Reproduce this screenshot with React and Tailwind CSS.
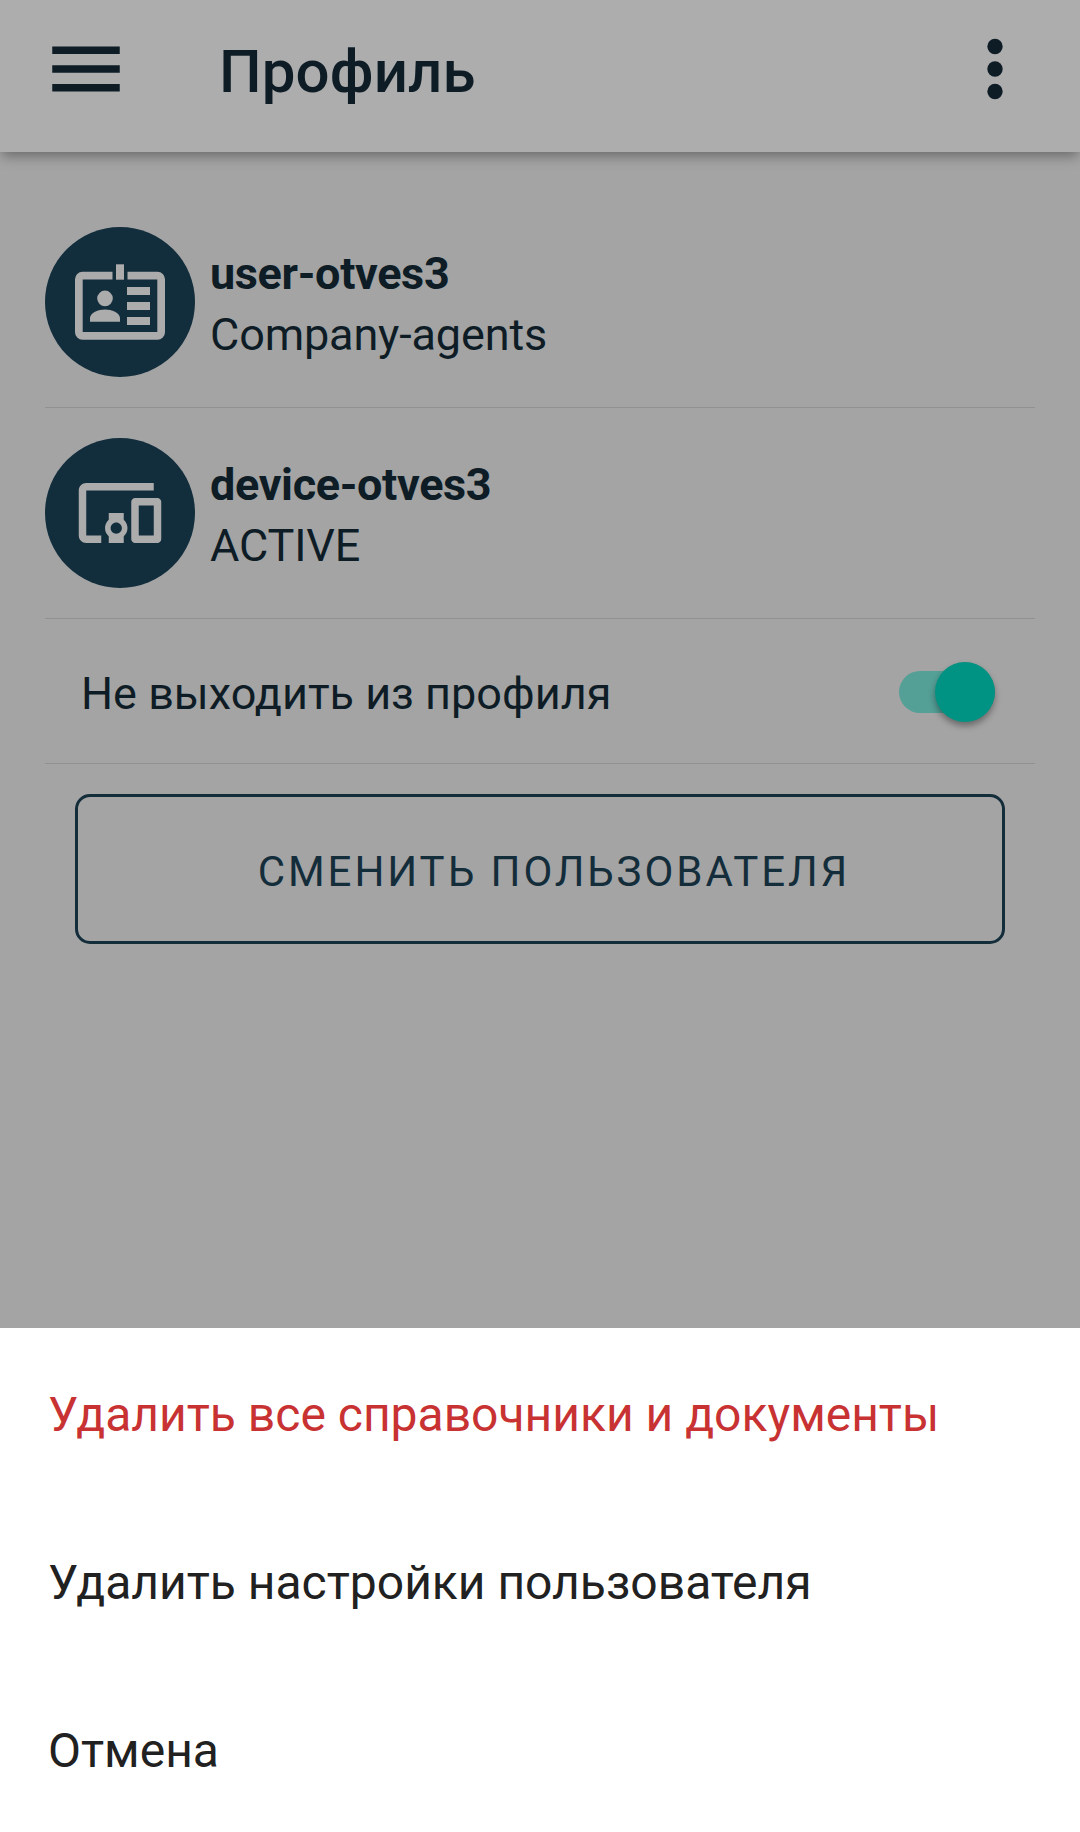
function MenuIcon() {
  return (
    <svg viewBox="0 0 24 24" className="size-[90px] shrink-0" fill="currentColor">
      <path d="M3 18h18v-2H3v2zm0-5h18v-2H3v2zm0-7v2h18V6H3z" />
    </svg>
  );
}

function MoreIcon() {
  return (
    <svg viewBox="0 0 24 24" className="size-[90px] shrink-0" fill="currentColor">
      <circle cx="12" cy="6" r="2.05" />
      <circle cx="12" cy="12" r="2.05" />
      <circle cx="12" cy="18" r="2.05" />
    </svg>
  );
}

function BadgeIcon() {
  return (
    <svg viewBox="0 0 90 76" className="h-[76px] w-[90px]" fill="currentColor">
      <path d="M41 0.3h8v15.4h-8z" />
      <path d="M37.5 7.8H7.5a7.5 7.5 0 0 0-7.5 7.5v53a7.5 7.5 0 0 0 7.5 7.5h75a7.5 7.5 0 0 0 7.5-7.5v-53a7.5 7.5 0 0 0-7.5-7.5H52.5v7.7H82.3v52.5H7.7V15.5H37.5z" />
      <circle cx="30" cy="34.4" r="7.8" />
      <path d="M15 57.7v-3.6c0-5.2 8.4-8.6 15-8.6s15 3.4 15 8.6v3.6z" />
      <path d="M52 23h23v8H52zM52 38h23v8H52zM52 53h23v8H52z" />
    </svg>
  );
}

function DevicesIcon() {
  return (
    <svg viewBox="0 0 24 24" className="size-[90px]" fill="currentColor">
      <path d="M3 6h18V4H3c-1.1 0-2 .9-2 2v12c0 1.1.9 2 2 2h4v-2H3V6zm10 6H9v1.78c-.61.55-1 1.33-1 2.22s.39 1.67 1 2.22V20h4v-1.78c.61-.55 1-1.34 1-2.22s-.39-1.67-1-2.22V12zm-2 5.5c-.83 0-1.5-.67-1.5-1.5s.67-1.5 1.5-1.5 1.5.67 1.5 1.5-.67 1.5-1.5 1.5zM22 8h-6c-.5 0-1 .5-1 1v10c0 .5.5 1 1 1h6c.5 0 1-.5 1-1V9c0-.5-.5-1-1-1zm-1 10h-4v-8h4v8z" />
    </svg>
  );
}

function InfoRow({ icon, title, subtitle }) {
  return (
    <div className="flex items-center gap-[15px] border-b border-[#919191] py-[30px]">
      <div className="flex size-[150px] shrink-0 items-center justify-center rounded-full bg-[#122d3c] text-[#acacac]">
        {icon}
      </div>
      <div className="pt-1 text-[45px] leading-[61px]">
        <p className="font-bold tracking-[-0.35px]">{title}</p>
        <p className="tracking-[-0.15px]">{subtitle}</p>
      </div>
    </div>
  );
}

const actions = [
  { label: 'Удалить все справочники и документы', danger: true },
  { label: 'Удалить настройки пользователя' },
  { label: 'Отмена' },
];

export default function App() {
  return (
    <div className="flex h-[1832px] w-[1080px] flex-col overflow-hidden bg-[#a4a4a4] font-['Roboto',sans-serif] text-[#0e1c26]">
      <header className="flex h-[152px] shrink-0 items-center bg-[#adadad] pr-[40px] pl-[41px] pb-[14px] shadow-[0_6px_12px_-2px_rgba(0,0,0,0.36)]">
        <MenuIcon />
        <h1 className="ml-[88px] flex-1 pt-[6px] text-[60px] leading-[70px] font-medium tracking-[0.15px]">Профиль</h1>
        <MoreIcon />
      </header>

      <main className="flex-1 px-[45px] pt-[45px]">
        <InfoRow icon={<BadgeIcon />} title="user-otves3" subtitle="Company-agents" />
        <InfoRow icon={<DevicesIcon />} title="device-otves3" subtitle="ACTIVE" />
        <div className="flex h-[145px] items-center justify-between border-b border-[#919191] pr-[40px] pl-[36px]">
          <span className="pt-[5px] text-[45px] leading-[53px]">Не выходить из профиля</span>
          <div className="mt-px flex h-[42px] w-[96px] items-center justify-end rounded-full bg-[#549f96]">
            <div className="size-[60px] shrink-0 rounded-full bg-[#009282] shadow-[0_4px_6px_rgba(0,0,0,0.35)]" />
          </div>
        </div>
        <button className="mx-[30px] mt-[30px] flex h-[150px] w-[930px] items-center justify-center rounded-[15px] border-3 border-[#142d3b] pt-[6px] pl-[28px] text-[42px] leading-[50px] tracking-[2.94px] text-[#142d3b]">
          СМЕНИТЬ ПОЛЬЗОВАТЕЛЯ
        </button>
      </main>

      <div className="flex h-[504px] shrink-0 flex-col bg-white pt-[3px] text-[48px] text-[#212121]">
        {actions.map(({ label, danger }) => (
          <button
            key={label}
            className={`flex h-[168px] shrink-0 items-center pl-[48px] text-left ${danger ? 'text-[#c83232]' : ''}`}
          >
            {label}
          </button>
        ))}
      </div>
    </div>
  );
}
